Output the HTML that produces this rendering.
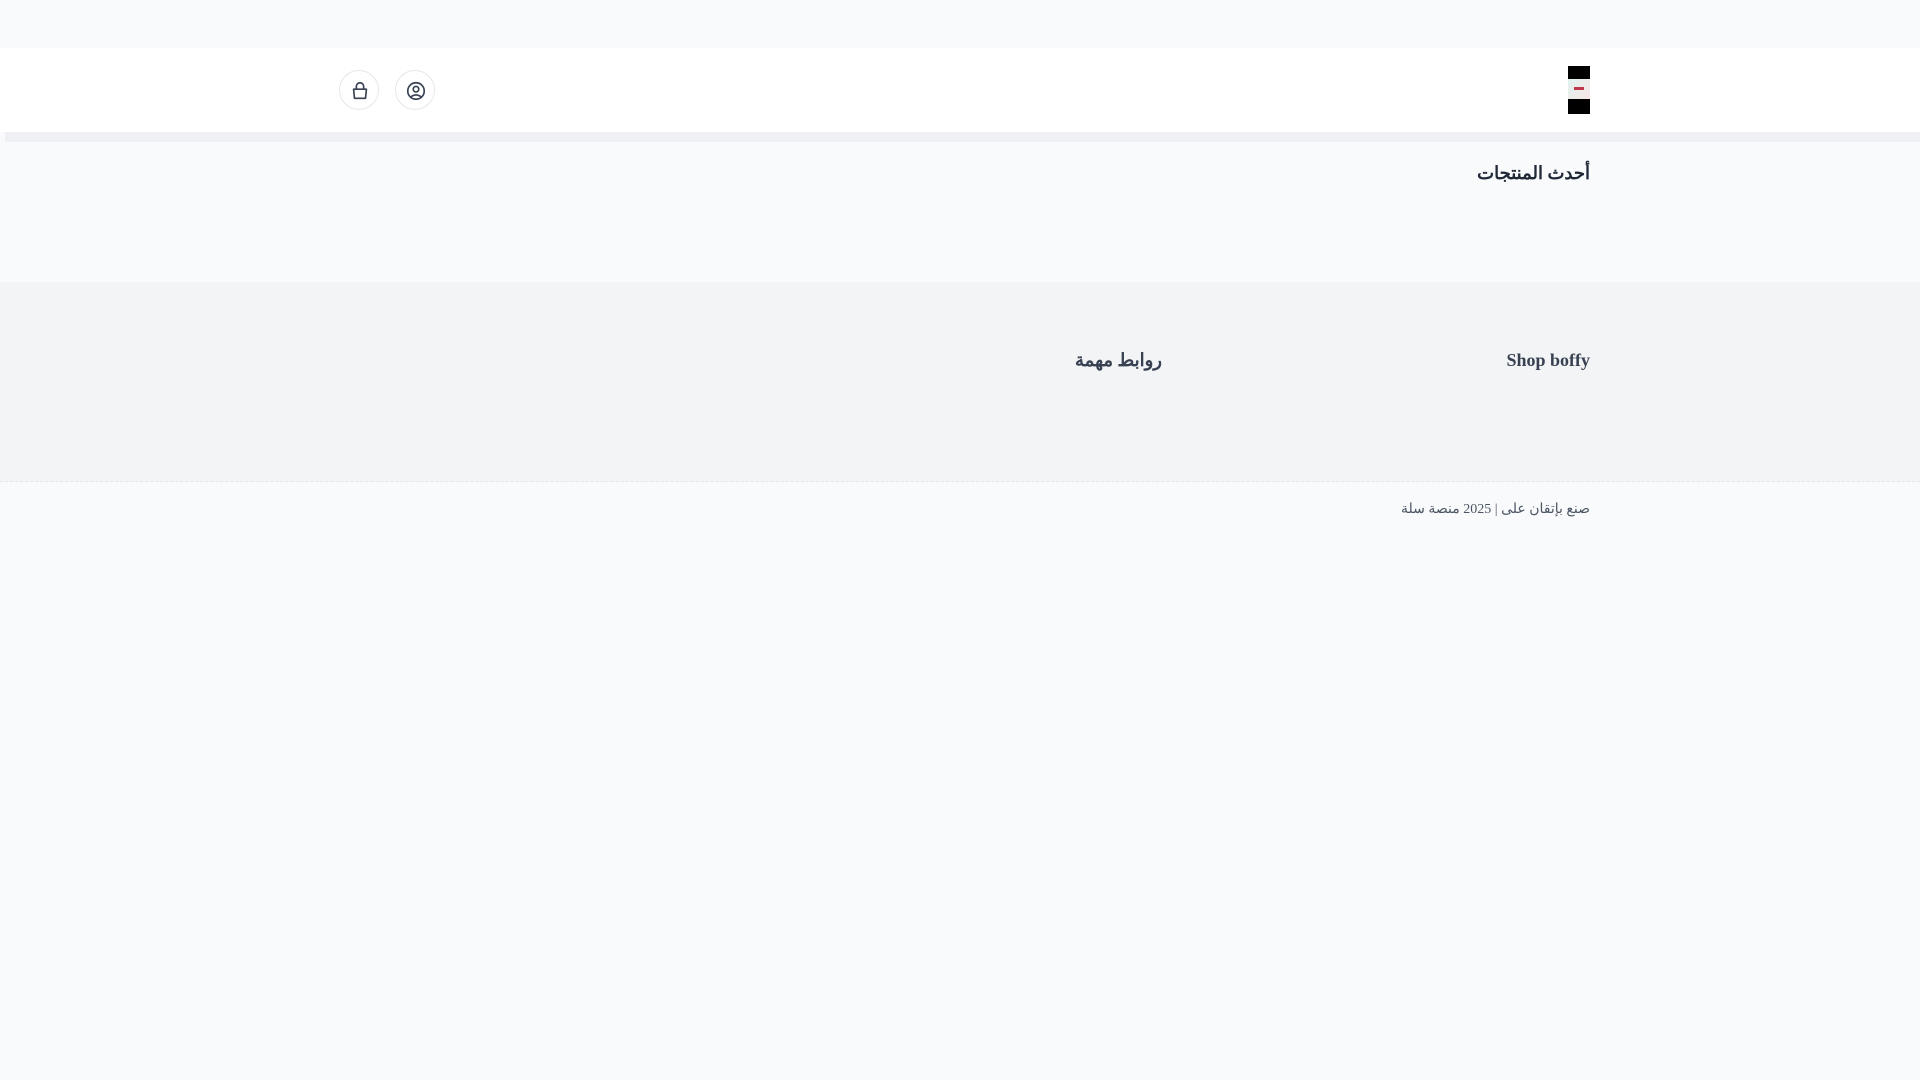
<!DOCTYPE html>
<html dir="rtl"><head><meta charset="utf-8"><style>
*{margin:0;padding:0;box-sizing:border-box}
body{width:1920px;height:1080px;background:#f9fafb;font-family:"Liberation Serif","Noto Serif CJK SC",serif;position:relative;overflow:hidden;color:#1f2937}
.hdr{position:absolute;top:48px;left:0;width:1920px;height:84px;background:#fff}
.strip{position:absolute;top:132px;left:5px;width:1915px;height:10px;background:#eef0f3}
.logo{position:absolute;left:1568px;top:66px;width:22px;height:48px;background:#000}
.logo i{position:absolute;left:0;top:13px;width:22px;height:20px;background:linear-gradient(135deg,#dff3ee,#f7e6e6)}
.logo b{position:absolute;left:6px;top:21px;width:10px;height:3px;background:#c0394b}
.c{position:absolute;top:70px;width:40px;height:40px;border:1px solid #e5e7eb;border-radius:50%;background:#fff}
.c svg{position:absolute;left:9px;top:9px}
.t{position:absolute;right:330px;font-weight:bold;white-space:nowrap}
.ft{position:absolute;top:282px;left:0;width:1920px;height:200px;background:#f3f4f6;border-bottom:1px dashed #e5e7eb}
</style></head><body>
<div class="hdr"></div>
<div class="strip"></div>
<div class="logo"><i></i><b></b></div>
<div class="c" style="left:339px"><svg width="22" height="22" viewBox="0 0 24 24" fill="none" stroke="#374151" stroke-width="1.8" stroke-linecap="round" stroke-linejoin="round"><path d="M8 10V7a4 4 0 0 1 8 0v3"/><path d="M5 10h14l-1 10H6z"/></svg></div>
<div class="c" style="left:395px"><svg width="22" height="22" viewBox="0 0 24 24" fill="none" stroke="#374151" stroke-width="1.8" stroke-linecap="round"><circle cx="12" cy="12" r="9"/><circle cx="12" cy="10" r="3"/><path d="M6.5 18.5c3-3 8-3 11 0"/></svg></div>
<div class="t" style="top:163px;font-size:18px;color:#1f2937">أحدث المنتجات</div>
<div class="ft"></div>
<div class="t" style="top:350px;font-size:18px;color:#374151">Shop boffy</div>
<div class="t" style="top:350px;right:758px;font-size:18px;color:#374151">روابط مهمة</div>
<div class="t" style="top:501px;font-size:14px;font-weight:normal;color:#4b5563">صنع بإتقان على | 2025 منصة سلة</div>
</body></html>
